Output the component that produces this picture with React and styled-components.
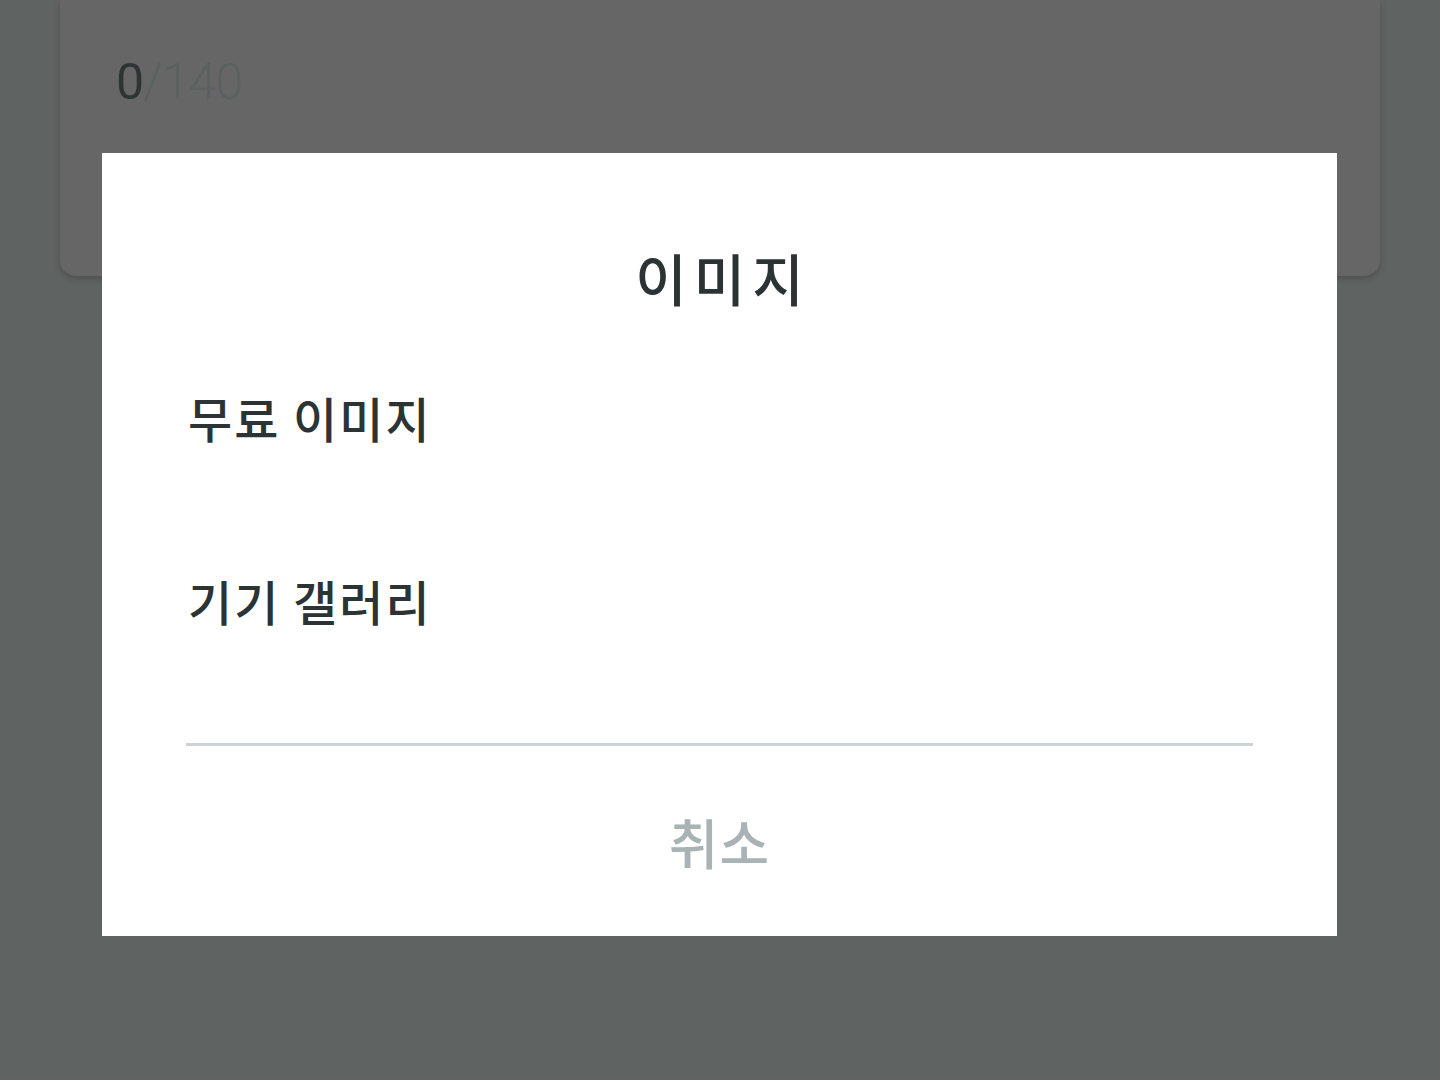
import * as React from 'react'
import styled, { createGlobalStyle } from 'styled-components'

const GlobalStyle = createGlobalStyle`
  html, body {
    margin: 0;
    padding: 0;
    height: 100%;
    background: #5f6361;
  }
  body {
    font-family: 'Noto Sans CJK KR Medium', 'Noto Sans CJK KR', 'Noto Sans', sans-serif;
  }
`

const Page = styled.div`
  width: 1440px;
  height: 1080px;
  padding: 0 60px;
  box-sizing: border-box;
  background: #5f6361;
  overflow: hidden;
`

const Card = styled.div`
  height: 276px;
  background: #666666;
  border-radius: 0 0 16px 16px;
  box-shadow: 0 3px 6px rgba(0, 0, 0, 0.18);
  padding: 52px 56px 0;
  box-sizing: border-box;
`

const Counter = styled.div`
  font-family: Roboto, 'Noto Sans', sans-serif;
  font-weight: 300;
  font-size: 50px;
  line-height: 60px;
  color: #5a6261;
  letter-spacing: -1px;

  b {
    font-weight: 400;
    color: #2e3434;
  }
`

const Overlay = styled.div`
  position: fixed;
  inset: 0;
  display: flex;
  justify-content: flex-start;
  align-items: flex-start;
  padding: 153px 0 0 102px;
`

const Dialog = styled.div`
  width: 1235px;
  height: 783px;
  background: #ffffff;
  padding: 84px 84px 0;
  box-sizing: border-box;
  display: flex;
  flex-direction: column;
`

const Title = styled.h2`
  margin: 0 0 9px;
  height: 80px;
  line-height: 80px;
  text-align: center;
  font-size: 56px;
  font-weight: 500;
  color: #2c3335;
  letter-spacing: 7px;
  text-indent: 7px;
`

const Option = styled.div`
  height: 183px;
  display: flex;
  align-items: center;
  padding-left: 2px;
  font-size: 48px;
  font-weight: 500;
  color: #2c3335;
  letter-spacing: 2px;
`

const Divider = styled.hr`
  margin: 52px 0 0;
  border: 0;
  height: 3px;
  background: #cdd3d5;
`

const CancelButton = styled.button`
  height: 190px;
  border: 0;
  padding: 0;
  background: transparent;
  font-family: inherit;
  font-size: 54px;
  font-weight: 500;
  color: #a9b2b5;
  letter-spacing: 1px;
  cursor: pointer;
`

const options = ['무료 이미지', '기기 갤러리']

export default function App() {
  return (
    <>
      <GlobalStyle />
      <Page>
        <Card>
          <Counter>
            <b>0</b>/140
          </Counter>
        </Card>
      </Page>
      <Overlay>
        <Dialog>
          <Title>이미지</Title>
          {options.map(label => (
            <Option key={label}>{label}</Option>
          ))}
          <Divider />
          <CancelButton>취소</CancelButton>
        </Dialog>
      </Overlay>
    </>
  )
}
